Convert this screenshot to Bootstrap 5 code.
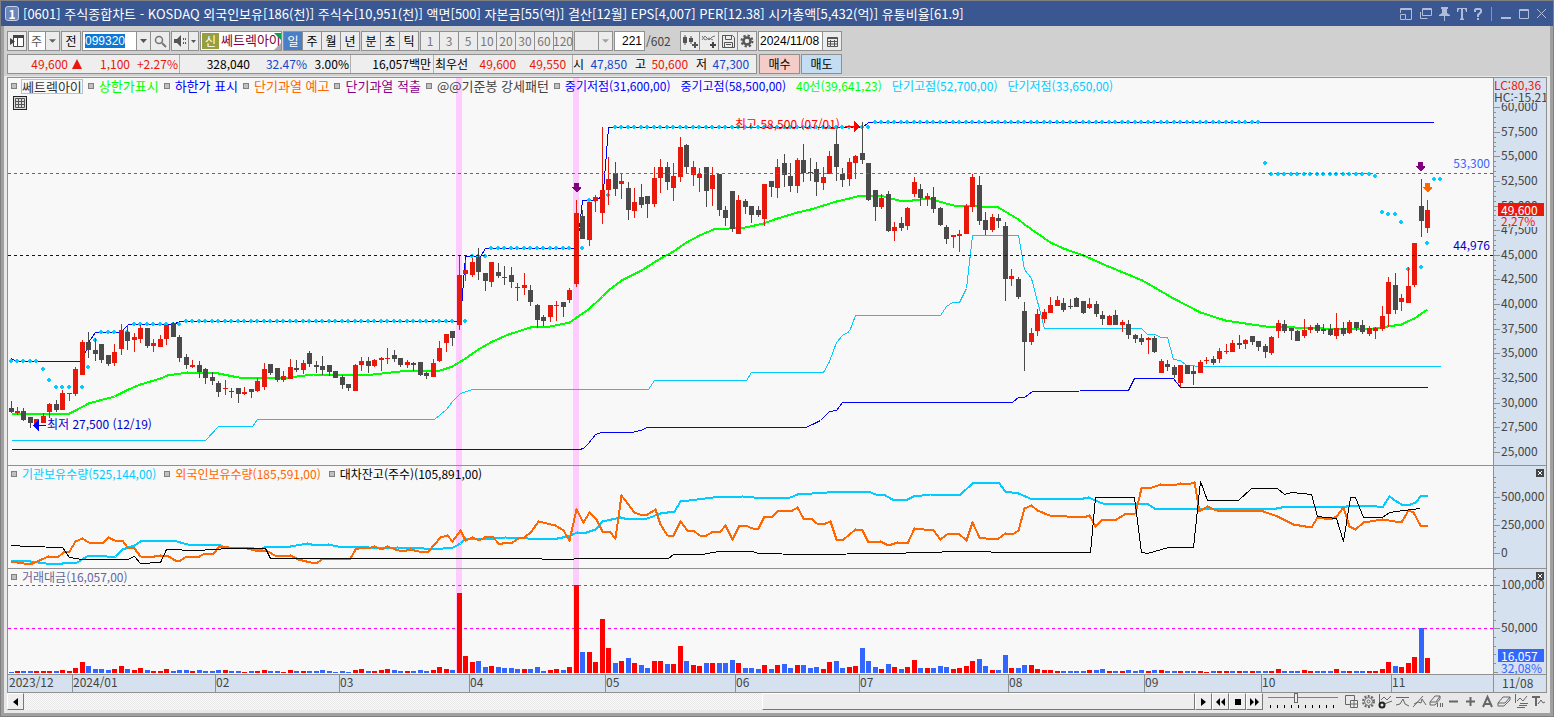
<!DOCTYPE html>
<html lang="ko">
<head>
<meta charset="utf-8">
<meta name="viewport" content="width=device-width, initial-scale=1">
<title>[0601] 주식종합차트</title>
<link href="https://cdn.jsdelivr.net/npm/bootstrap@5.3.0/dist/css/bootstrap.min.css" rel="stylesheet">
<style>
:root{--ln:#909090;--up:#e8190a;--cy:#00ccff;--ax:#d6e1ef}
body{font-family:"Noto Sans CJK KR","Liberation Sans",sans-serif;font-size:12px;line-height:16px;color:#000;background:#e8e8e8}
.win{min-height:100vh;border:solid #a0a0a0;border-width:1px 4px 4px 4px;outline:1px solid #808080;outline-offset:-1px}
.titlebar{height:25px;background:#3a5792;color:#fff;margin:0 -4px;padding:0 8px 0 5px;font-size:13px;white-space:pre}
.titlebar .num{width:14px;height:15px;border:1px solid #c5d0e6;border-radius:3px;background:#6c86bb;font-size:12px;line-height:13px;font-weight:700;text-align:center;margin-right:4px}
.titlebar button{border:0;background:none;padding:0;color:#b0bdd8;display:flex}
.left-icons{gap:7px}
.tools{background:#d0d0d0;padding:5px 0 2px 3px;gap:3px}
.tools-row{height:20px;gap:1px;white-space:nowrap}
.bx{border:1px solid var(--ln);background:#ececec;border-radius:0;padding:0;font-size:12px;line-height:16px;color:#000;height:20px}
.tb{width:20px;display:inline-flex;align-items:center;justify-content:center}
.tb.dim{color:#777}
.tb.on{background:#4a7fc8;color:#fff}
.sel{background:#ececec url("data:image/svg+xml,%3Csvg xmlns='http://www.w3.org/2000/svg' viewBox='0 0 8 4'%3E%3Cpath d='M0 0h8L4 4z' fill='%23606060'/%3E%3C/svg%3E") no-repeat right 3px center/7px 4px;appearance:none;border:1px solid var(--ln);height:20px;border-radius:0;font-size:12px;line-height:16px;padding:0 0 0 2px}
.sel.split{background:url("data:image/svg+xml,%3Csvg xmlns='http://www.w3.org/2000/svg' viewBox='0 0 8 4'%3E%3Cpath d='M0 0h8L4 4z' fill='%23606060'/%3E%3C/svg%3E") no-repeat right 3px center/7px 4px,linear-gradient(90deg,#909090 1px,#ececec 1px) no-repeat right/14px 100% #fff;color:#555}
.sel.off{background-image:url("data:image/svg+xml,%3Csvg xmlns='http://www.w3.org/2000/svg' viewBox='0 0 8 4'%3E%3Cpath d='M0 0h8L4 4z' fill='%23a0a0a0'/%3E%3C/svg%3E"),linear-gradient(90deg,#909090 1px,#ececec 1px);background-repeat:no-repeat;background-position:right 3px center,right;background-size:7px 4px,14px 100%}
.inp{border:1px solid var(--ln);background:#fff;height:20px;padding:0 2px;font-family:"Liberation Sans",sans-serif;font-size:12px;line-height:16px;border-radius:0;outline:0}
.code::selection{background:#0a78d6;color:#fff}
.quote{border:1px solid var(--ln);background:#eee;height:20px;width:750px;line-height:18px;margin-right:1px}
.quote>div{border-right:1px solid #b0b0b0;height:100%}
.quote>div:last-child{border:0}
.q1{width:172px}.q2{width:171px}.q3{width:83px}.q4{width:139px}
.n{text-align:right;width:50px}
.red{color:var(--up)}.blu{color:#1446c8}
.trade{width:41px;height:20px;border:1px solid var(--ln);border-radius:0;font-size:12px;line-height:16px;padding:0}
.frame{margin:1px 3px 0;border:1px solid var(--ln);border-bottom:0;display:grid;grid-template-columns:minmax(0,1fr) 53px;grid-template-rows:388fr 103fr 106fr 18px;background:#f8f8f8}
.cell{position:relative;border-bottom:1px solid var(--ln);min-height:0;overflow:hidden}
.cell>svg{position:absolute;inset:0;width:100%;height:100%}
.ax{background:var(--ax);border-left:1px solid var(--ln)}
svg text{font-size:12px}
.legend{position:relative;padding-left:3px;height:16px;white-space:nowrap}
.legend span{margin-left:5px;margin-right:5px}
.legend .name{font-size:13px}
.legend.wide span{margin-right:8px}
.legend i{width:6px;height:6px;border:1px solid #808080;background:#c0c0c0;flex:none}
.legend .boxed{outline:1px solid #c0c0c0;background:#fafafa;height:13px;line-height:13px;color:#333;margin-right:6px}
.gridbtn{position:relative;width:14px;height:14px;margin:2px 5px;padding:0;border:1px solid #222;background:#ddd;display:flex}
.tag{position:absolute;left:4px;right:2px;height:13px;line-height:13px;color:#fff;padding-left:3px;z-index:1}
.sub{position:absolute;left:4px;right:2px;height:12px;line-height:12px;padding-left:3px;background:var(--ax)}
.limits{position:absolute;left:0;right:0;top:1px;line-height:12px;background:var(--ax);white-space:nowrap}
.closebtn{position:absolute;right:2px;top:3px;width:8px;height:8px;background:#444;border:0;padding:0;display:flex}
.scrollrow{margin:0 3px;height:20px;padding-bottom:3px}
.track{background:repeating-conic-gradient(#e8e8e8 0 25%,#fafafa 0 50%) 0 0/2px 2px}
.thumb,.sb{background:#eee;border:1px solid;border-color:#fff #777 #777 #fff}
.thumb{height:17px;margin-left:auto;width:37%}
.sb{width:17px;height:17px;padding:0;display:flex;align-items:center;justify-content:center;flex:none;outline:0}
.zoomer{width:70px;margin:0 5px;height:16px}
.zoomer input{appearance:none;display:block;width:100%;height:10px;background:linear-gradient(#808080,#808080) 0 4px/100% 1px no-repeat;margin:0}
.zoomer input::-webkit-slider-thumb{appearance:none;width:4px;height:10px;background:#eee;border:1px solid #666}
.ticks{height:3px;background:repeating-linear-gradient(90deg,#000 0 1px,transparent 1px 7px);margin:2px 2px 0}
.ic{border:0;background:none;padding:0;width:17px;height:17px;display:flex;align-items:center;justify-content:center;color:#666}
</style>
</head>
<body>
<div class="win d-flex flex-column">
  <header class="titlebar d-flex align-items-center">
    <span class="num">1</span><span>[0601] 주식종합차트 - KOSDAQ 외국인보유[186(천)] 주식수[10,951(천)] 액면[500] 자본금[55(억)] 결산[12월] EPS[4,007] PER[12.38] 시가총액[5,432(억)] 유통비율[61.9]</span>
    <div class="ms-auto d-flex align-items-center gap-2">
      <div class="left-icons d-flex align-items-center">
      <button type="button" aria-label="도킹"><svg width="12" height="12" fill="none" stroke="currentColor"><path d="M.5 5V.5h11v11H6M.5 6.500h5v5h-5zM0 1.500h12"/></svg></button>
      <button type="button" aria-label="복제"><svg width="13" height="12" fill="none" stroke="currentColor"><path d="M3.500.5h9v7h-9zM3 1.500h9M1.500 4v6.500h7"/></svg></button>
      <button type="button" aria-label="고정"><svg width="11" height="14" fill="currentColor"><path d="M2 0h7v2H8v4l3 2v1H6v5H5V9H0V8l3-2V2H2z"/></svg></button>
      <button type="button" aria-label="글꼴"><svg width="10" height="12" fill="currentColor"><path d="M0 0h10v4H9L8 1H6v9l1 1v1H3v-1l1-1V1H2L1 4H0z"/></svg></button>
      <button type="button" aria-label="도움말"><svg width="8" height="12" fill="none" stroke="currentColor" stroke-width="2"><path d="M1 4V2l1-1h4l1 1v2L4 7v2M4 10v2"/></svg></button>
      </div>
      <svg width="3" height="14"><path d="M1.500 0v14" stroke="#7f93bd"/></svg>
      <button type="button" aria-label="최소화"><svg width="10" height="12"><path d="M0 10h10" stroke="currentColor" stroke-width="2"/></svg></button>
      <button type="button" aria-label="최대화"><svg width="10" height="10" fill="none" stroke="currentColor"><path d="M.5.5h9v9h-9zM0 1.500h10"/></svg></button>
      <button type="button" aria-label="닫기"><svg width="9" height="9"><path d="M0 0l9 9M9 0L0 9" stroke="currentColor"/></svg></button>
    </div>
  </header>

  <div class="tools d-flex flex-column">
    <div class="tools-row d-flex">
      <button class="bx tb" type="button" aria-label="패널"><svg width="14" height="14"><path d="M3.500 1.500h10v11h-10zM7.500 4v8" fill="#fff" stroke="#444"/><path d="M3 1h11v3H3zM0 4l5 3.500L0 11z" fill="#444"/></svg></button>
      <select class="sel split" aria-label="구분" style="width:32px"><option>주</option></select>
      <button class="bx tb" type="button">전</button>
      <div class="d-flex">
        <input class="inp code" id="code" aria-label="종목코드" value="099320" style="width:55px">
        <button class="bx tb" type="button" aria-label="목록" style="width:15px;margin-left:-1px"><svg width="7" height="4"><path d="M0 0h7L3.500 4z" fill="#555"/></svg></button>
        <button class="bx tb" type="button" aria-label="검색" style="margin-left:-1px"><svg width="13" height="13" fill="none" stroke="#777"><circle cx="5" cy="5" r="3.500" stroke-width="1.500"/><path d="M8 8l4 4" stroke-width="2"/></svg></button>
      </div>
      <div class="d-flex">
        <button class="bx tb" type="button" aria-label="소리" style="width:18px"><svg width="13" height="12" fill="#555"><path d="M0 4h3l4-4v12L3 8H0zM9 3h1v2H9zM9 7h1v2H9zM11 3h1v2h-1zM11 7h1v2h-1z"/></svg></button>
        <button class="bx tb" type="button" aria-label="소리 설정" style="width:11px;margin-left:-1px"><svg width="5" height="3"><path d="M0 0h5L2.500 3z" fill="#555"/></svg></button>
      </div>
      <div class="bx bg-white d-flex position-relative overflow-hidden" style="width:82px"><span style="background:#97a03c;color:#fff;width:17px;text-align:center;margin:1px 2px 1px 1px">신</span><span style="color:#800040;font-size:13px">쎄트렉아이</span>
        <svg class="position-absolute end-0 top-0" width="8" height="18"><path d="M1 1h7v7z" fill="#0fa050"/><path d="M8 11v7H1z" fill="#aaa"/></svg></div>
      <div class="d-flex" id="periods"></div>
      <div class="d-flex" id="units"></div>
      <div class="d-flex" id="mins"></div>
      <select class="sel off" aria-label="분 간격" disabled style="width:39px"><option></option></select>
      <div class="d-flex"><input class="inp text-end" aria-label="봉 개수" value="221" style="width:31px"><span style="color:#444;line-height:20px;width:34px;padding-left:1px">/602</span></div>
      <div class="d-flex">
        <button class="bx tb" type="button" aria-label="차트 유형"><svg width="16" height="15" fill="#555"><path d="M1 3h4v6H1zM2.500 1h1v10h-1zM7 4h4v4H7zM8.500 2h1v8h-1zM12 8h2v2h2v2h-2v2h-2v-2h-2v-2h2z"/></svg></button>
        <button class="bx tb" type="button" aria-label="지표 추가" style="margin-left:-1px"><svg width="16" height="15"><path d="M1 6l3-4 4 4 3-3 3-1M1 2l3 4 4-2 4 2" fill="none" stroke="#777"/><path d="M11 8h2v2h2v2h-2v2h-2v-2H9v-2h2z" fill="#444"/></svg></button>
        <button class="bx tb" type="button" aria-label="저장" style="margin-left:-1px"><svg width="15" height="15" fill="none" stroke="#555"><path d="M1.500 1.500h10l2 2v10h-12zM4.500 1.500v4h6v-4M3.500 13V8.500h8V13M5 10.500h5"/></svg></button>
        <button class="bx tb" type="button" aria-label="설정" style="margin-left:-1px"><svg width="14" height="14" fill="none" stroke="#555"><circle cx="7" cy="7" r="3.500" stroke-width="2.500"/><circle cx="7" cy="7" r="5.500" stroke-width="2" stroke-dasharray="2.300 2"/></svg></button>
      </div>
      <div class="d-flex"><input class="inp" aria-label="날짜" value="2024/11/08" style="width:65px;padding:0 1px">
        <button class="bx tb" type="button" aria-label="달력" style="margin-left:-1px"><svg width="11" height="11" fill="none" stroke="#555"><path d="M.5 1.500h10v9H.5zM0 2.500h11M0 5.500h11M0 8h11M3.500 4v7M7.500 4v7"/></svg></button></div>
    </div>
    <div class="tools-row d-flex">
      <div class="quote d-flex">
        <div class="q1 d-flex red"><span class="n" style="width:60px">49,600</span><svg class="mt-1 ms-1" width="10" height="10"><path d="M5 0l5 10H0z" fill="#e8190a"/></svg><span class="n" style="width:48px">1,100</span><span class="n" style="width:48px">+2.27%</span></div>
        <div class="q2 d-flex"><span class="n" style="width:70px">328,040</span><span class="n blu" style="width:57px">32.47%</span><span class="n" style="width:42px">3.00%</span></div>
        <div class="q3"><span class="d-block text-end" style="padding-right:2px">16,057백만</span></div>
        <div class="q4 d-flex"><span style="padding-left:1px">최우선</span><span class="n red" style="width:48px">49,600</span><span class="n red">49,550</span></div>
        <div class="d-flex"><span>시</span><span class="n blu" style="width:43px">47,850</span><span class="ms-2">고</span><span class="n red" style="width:42px">50,600</span><span class="ms-2">저</span><span class="n blu" style="width:42px">47,300</span></div>
      </div>
      <button class="trade" type="button" style="background:#f5cdc8">매수</button>
      <button class="trade" type="button" style="background:#c5ddf2">매도</button>
    </div>
  </div>

  <main class="frame flex-grow-1">
    <div class="cell" id="p1">
      <div class="legend d-flex align-items-center">
        <i></i><span class="name boxed">쎄트렉아이</span><i></i><span class="name" style="color:#0f0">상한가표시</span><i></i><span class="name" style="color:#00f">하한가 표시</span><i></i><span class="name" style="color:#f60">단기과열 예고</span><i></i><span class="name" style="color:#808">단기과열 적출</span><i></i><span class="name" style="color:#444">@@기준봉 강세패턴</span><i></i><span style="color:#00f">중기저점(31,600,00)</span><span style="color:#00f">중기고점(58,500,00)</span><span style="color:#0f0">40선(39,641,23)</span><span style="color:#0cf">단기고점(52,700,00)</span><span style="color:#0cf">단기저점(33,650,00)</span>
      </div>
      <button class="gridbtn" type="button" aria-label="표 보기"><svg width="12" height="12" fill="none" stroke="#555"><path d="M1.500 1.500h9v9h-9zM1 4.500h10M1 7.500h10M4.500 1v10M7.500 1v10"/></svg></button>
    </div>
    <div class="cell ax" id="a1">
      <div class="tag" style="top:32.200%;background:#e8190a">49,600</div>
      <div class="sub red" style="top:35.300%">2,27%</div>
      <div class="limits"><div class="red">LC:80,36</div><div style="color:#444">HC:-15,21</div></div>
    </div>
    <div class="cell" id="p2">
      <div class="legend wide d-flex align-items-center"><i></i><span style="color:#0cf">기관보유수량(525,144,00)</span><i></i><span style="color:#f60">외국인보유수량(185,591,00)</span><i></i><span>대차잔고(주수)(105,891,00)</span></div>
    </div>
    <div class="cell ax" id="a2"><button class="closebtn" type="button" aria-label="닫기"><svg width="8" height="8"><path d="M2 2l4 4M6 2L2 6" stroke="#fff"/></svg></button></div>
    <div class="cell" id="p3">
      <div class="legend d-flex align-items-center"><i></i><span style="color:#669">거래대금(16,057,00)</span></div>
    </div>
    <div class="cell ax" id="a3"><button class="closebtn" type="button" aria-label="닫기"><svg width="8" height="8"><path d="M2 2l4 4M6 2L2 6" stroke="#fff"/></svg></button>
      <div class="tag" style="bottom:12px;background:#36f">16,057</div>
      <div class="sub" style="bottom:0;color:#36f">32,08%</div></div>
    <div class="cell" id="dates" style="background:var(--ax)"></div>
    <div class="cell ax" style="color:#444;padding-left:8px">11/08</div>
  </main>

  <footer class="scrollrow d-flex">
    <button class="sb" type="button" aria-label="왼쪽"><svg width="5" height="8"><path d="M5 0v8L0 4z"/></svg></button>
    <div class="track flex-grow-1 d-flex"><div class="thumb"></div></div>
    <button class="sb" type="button" aria-label="오른쪽"><svg width="5" height="8"><path d="M0 0v8l5-4z"/></svg></button>
    <button class="sb" type="button" aria-label="처음"><svg width="9" height="8"><path d="M4 0v8L0 4zM9 0v8L5 4z"/></svg></button>
    <button class="sb" type="button" aria-label="정지"><svg width="6" height="6"><path d="M0 0h6v6H0z"/></svg></button>
    <button class="sb" type="button" aria-label="끝"><svg width="9" height="8"><path d="M0 0v8l4-4zM5 0v8l4-4z"/></svg></button>
    <div class="zoomer"><input type="range" min="0" max="100" value="39" aria-label="확대"><div class="ticks"></div></div>
    <div class="d-flex" id="drawtools"></div>
  </footer>
</div>

<script src="https://cdn.jsdelivr.net/npm/bootstrap@5.3.0/dist/js/bootstrap.bundle.min.js"></script>
<script>
const $=id=>document.getElementById(id);
const tabs=(id,list,on,dim)=>$(id).innerHTML=list.map((t,i)=>`<button type="button" class="bx tb ${t===on?'on':''} ${dim?'dim':''}" style="${i?'margin-left:-1px':''}">${t}</button>`).join('');
tabs('periods',['일','주','월','년'],'일');
tabs('units',['분','초','틱']);
tabs('mins',['1','3','5','10','20','30','60','120'],null,true);

// each candle: colour, high, body top, body bottom, low
const candles=`g401,408,412,413 r407,411,413,415 g408,411,420,421 g417,417,423,428 r419,419,424,424 r413,416,423,423 r403,404,412,418 g400,404,410,412 r390,393,410,410 r393,393,394,401 r367,369,394,396 r340,342,375,375 g332,342,350,358 g338,350,354,361 g344,344,360,363 g355,355,364,366 r344,352,363,366 r324,330,349,355 g325,332,341,350 r333,337,340,352
r325,328,339,343 g328,328,346,348 r339,343,346,352 r335,339,347,347 r325,325,339,345 g322,323,337,337 g335,337,358,362 g354,357,365,369 r360,365,367,368 g361,365,372,378 g368,369,378,384 g372,377,381,385 g381,383,392,397 r380,388,389,395 g388,391,392,398 g388,388,394,403 r387,392,394,395 g389,389,392,398 r378,381,391,392 r363,369,387,390
g364,364,373,375 g368,368,380,382 r371,376,380,382 r359,367,379,379 g360,368,370,372 r360,363,370,374 g351,353,364,367 g361,365,367,373 g356,366,370,375 g365,365,372,376 g371,371,378,378 g375,377,385,389 g384,384,388,391 r364,365,391,391 r357,361,365,371 g357,361,366,373 r359,360,366,367 r357,358,360,371 r348,358,359,364 g350,355,359,362
g358,358,365,367 r360,362,365,368 g362,363,365,371 g362,362,375,376 g372,373,376,379 r359,363,377,377 r341,348,361,362 r334,334,343,352 g331,331,338,346 r255,275,325,330 r260,270,274,281 r258,262,275,277 g248,257,272,280 g273,273,281,291 r262,262,282,287 g263,272,276,278 g266,277,278,285 g267,275,282,288 g283,287,288,301 r273,285,288,295
g285,290,302,306 g304,305,320,328 g315,317,321,326 r305,305,317,322 r301,305,306,321 g302,302,307,317 r288,290,300,303 r200,213,284,287 g210,216,239,239 r202,202,240,246 r195,197,201,212 r127,190,213,224 r157,179,190,205 g162,173,189,196 r174,181,184,199 g182,188,210,220 r188,202,211,218 g184,197,205,208 g196,196,204,218 r167,178,204,207
r159,167,178,193 g162,167,182,190 r163,176,188,201 r137,147,177,182 g144,145,167,173 r161,167,175,186 r168,174,178,192 g167,167,191,207 r167,175,189,206 g174,174,210,216 g206,210,218,226 g191,191,229,232 r195,200,234,234 g199,201,207,214 g206,206,215,223 g206,210,215,217 r184,184,219,226 g181,181,187,197 r159,167,188,198 g154,163,175,187
g163,176,186,192 r158,160,186,193 g144,160,173,182 g158,172,173,181 g162,169,182,196 r167,177,183,190 r151,156,174,174 g130,144,167,181 g168,174,180,187 r158,162,179,186 r155,156,163,179 g122,153,160,164 g163,163,200,201 g190,190,207,221 r194,198,207,209 g191,194,231,232 r222,227,231,241 g217,223,228,231 r207,208,226,230 r177,182,194,197
g184,189,198,206 r193,196,199,206 g187,197,209,213 g207,208,225,226 g225,227,239,244 r235,235,237,248 r230,234,236,252 r204,206,234,234 r174,177,207,212 g176,185,221,225 g212,220,230,235 r214,217,230,232 g214,218,221,228 g222,226,279,301 r269,276,279,286 g277,279,297,299 g302,311,342,371 r328,333,342,345 r309,314,331,336 r309,312,319,323
r297,305,313,313 r296,300,306,306 g298,303,310,312 g299,306,307,309 g297,298,307,307 g301,301,313,314 r298,304,308,309 g301,304,314,317 g311,315,319,325 r315,316,325,325 g310,315,325,325 r320,322,325,332 g320,324,335,339 g334,335,339,343 g334,338,342,345 r337,338,340,354 g336,338,352,353 r359,361,373,373 g360,364,367,371 g365,367,375,378
r365,365,383,387 g365,365,374,374 g366,371,374,385 r360,362,373,373 r357,360,361,364 g356,359,363,365 r348,351,359,363 r344,351,352,354 r340,343,352,352 g335,343,345,349 r339,340,344,349 g336,336,342,345 g341,341,347,351 g344,346,352,358 r336,337,353,355 r320,323,331,338 g320,324,331,333 g328,328,331,340 g330,331,341,341 r319,330,336,338
r325,327,330,333 g323,325,331,333 g324,329,331,334 g324,329,335,336 r313,328,336,339 g322,328,334,336 r320,322,333,334 g322,322,328,331 g320,325,332,334 r326,328,334,336 r327,328,331,339 r306,316,329,331 r277,282,314,327 g273,285,310,314 r294,298,302,311 r267,286,303,303 r243,243,285,287 g179,206,221,237 r200,210,228,233`.split(/\s+/);
// traded value per bar, height in chart units
const vols=`b1 r2 b2 b2 r2 r2 r2 b2 r3 r2 r5 r11 b7 b4 b4 b3 r4 r7 b4 r3 r5 b3 r2 r2 r4 b2 b3 b3 r2 b3 b2 b2 b3 r3 b2 b2 r1 b2 r2 r3 b2 b2 r1 r3 b2 r2 b2 b2 b3 b2 b1 b2 b1 r3 r4 b2 r2 r3 r4 b3 b2 r2 b2 b3 b2 r3 r6 r4 b3 r80 r17 r11 b12 b6 r7 b6 b5 b5 b4 r4 b4 b6 b2 r3 r4 b3 r6 r88 b21 r21 r11 r54 r25 b10 r12 b15 r10 b8 b5 r12 r12 b9 r9 r27 b12 r8 r7 b10 r10 b10 b10 b13 r10 b5 b5 b4 r8 b4 r8 b9 b5 r8 b8 b5 b6 r4 r11 b12 b5 r6 r7 b25 b12 b6 r4 b9 r6 b4 r6 r13 b5 r5 b5 b7 b6 r4 r5 r7 r12 b14 b7 r3 b3 b18 r5 b5 b8 r8 r4 r3 r3 r2 b2 b2 b2 b2 r3 b3 b4 r2 b2 r2 b3 b2 b3 r2 b3 r3 b2 b2 r2 b2 b2 r2 r1 b2 r2 r2 b2 r2 b2 r2 b2 b2 r2 r4 b2 b2 b2 r3 r2 b2 b2 b2 r4 b2 r2 b2 b2 r2 r2 r4 r11 b7 r6 r10 r16 b45 r15`.split(' ');
const dotRuns=[[0,4,361],[5,5,369],[6,6,380],[7,9,387],[11,11,387],[12,12,367],[13,13,340],[14,18,332],[19,26,324],[27,70,321],[71,73,256],[74,88,248],[89,91,200],[92,92,195],[93,132,127],[133,192,122],[193,193,163],[194,209,174],[210,210,176],[211,211,212],[212,213,214],[214,214,222],[215,215,269],[217,217,267],[218,218,243],[219,220,179]];
const bx=i=>Math.floor(11+6.498*i);
const line=(p,c,w=1)=>`<polyline points="${p}" transform="translate(.5 .5)" fill="none" stroke="${c}" stroke-width="${w}" stroke-linejoin="round"/>`;
const dash=(y,c)=>`<path d="M8 ${y}.5H1493" stroke="${c}" stroke-dasharray="3 3"/>`;
const bands=(y,h)=>`<path d="M456 ${y}h6v${h}h-6zM573 ${y}h6v${h}h-6z" fill="#fcf"/>`;
const plot=(id,top,h,body,over='')=>$(id).insertAdjacentHTML('afterbegin',`<svg><svg viewBox="8 ${top} 1485 ${h}" preserveAspectRatio="none" width="100%" height="100%" shape-rendering="crispEdges">${body}</svg>${over}</svg>`);
const pc=(v,o,s)=>((v-o)/s*100).toFixed(3)+'%';
const label=(x,y,t,c,a='start')=>`<text x="${pc(x,8,1485)}" y="${pc(y,78,387)}" fill="${c}" text-anchor="${a}">${t}</text>`;
const col={r:'#e8190a',g:'#4a4a4a'};

let s=bands(78,387);
s+=line('11,358 14,360 17,361 80,361 85,352 88,342 95,332 121,332 123,329 128,324 172,324 180,321 460,321 462,294 465,256 480,256 485,248 576,248 579,227 582,200 593,200 599,198 603,190 608,127 862,127 868,122 1433,122','#00f');
s+=line('11,449 579,449 583,448 588,443 595,434 601,432 631,432 640,430 647,427 805,427 812,424 820,420 829,411 836,410 842,402 1012,402 1018,397 1024,397 1032,391 1128,390 1134,378 1173,378 1180,387 1427,387','#00f');
s+=line('11,440 205,440 218,426 252,426 257,419 434,419 440,414 446,409 452,401 460,393 472,389 648,389 654,380 746,380 751,372 823,372 829,361 836,342 842,335 849,331 855,315 940,315 946,306 952,302 959,302 966,288 972,235 1018,235 1024,269 1031,278 1037,301 1044,328 1141,328 1147,334 1154,334 1161,337 1167,337 1173,359 1180,360 1186,365 1202,366 1440,366','#0cf');
s+=line('11,413 62,413 69,413 75,410 88,403 114,396 128,389 140,384 160,378 167,375 187,372 218,373 238,377 288,377 313,374 363,375 400,371 440,370 452,366 465,358 478,349 492,341 508,334 530,327 550,326 569,322 588,309 602,296 608,290 621,280 641,270 660,258 673,251 686,242 699,235 713,229 745,227 763,223 777,218 797,212 810,209 836,201 849,198 860,195 880,195 898,200 912,200 927,198 935,200 953,205 979,206 998,207 1018,219 1024,224 1050,242 1063,248 1083,255 1108,266 1142,280 1154,287 1173,298 1200,312 1225,320 1265,326 1323,328 1373,328 1387,326 1401,324 1407,321 1414,318 1427,309','#0f0',2);
for(const [a,b,y] of dotRuns)for(let i=a;i<=b;i++)s+=`<path d="M${bx(i)-1} ${y-2}h2v1h1v2h-1v1h-2v-1h-1v-2h1z" fill="#0cf"/>`;
candles.forEach((c,i)=>{const [h,t,b,l]=c.slice(1).split(',').map(Number),x=bx(i);
  s+=`<path d="M${x} ${h}h1v${Math.max(l-h,1)}h-1zM${x-2} ${t}h5v${b-t}h-5z" fill="${col[c[0]]}"/>`});
s+=dash(173,'#36f')+dash(255,'#0000c0');
const arrow=(x,y,c)=>`<path d="M${x-2} ${y}h5v4h2v1l-4 4h-1l-4-4v-1h2z" fill="${c}"/>`;
s+=arrow(576,183,'#800080')+arrow(1420,162,'#800080')+arrow(1427,183,'#f60');
s+='<path d="M845 126h9v-5l6 6-6 5v-5h-9z" fill="red"/><path d="M46 425h-7v-5l-6 5.500 6 5.500v-5h7z" fill="#00f"/>';
plot('p1',78,387,s,label(735,129,'최고 58,500 (07/01)','red')+label(47,429,'최저 27,500 (12/19)','#0000c8')+label(1490,168,'53,300','#36f','end')+label(1490,250,'44,976','#0000c8','end'));

s=bands(466,102);
s+=line('11,560 30,561 45,563 62,563 77,562 88,555 103,555 110,557 115,556 122,549 134,545 140,541 173,540 187,544 218,544 225,547 253,548 260,549 266,546 290,546 307,543 315,545 328,544 337,546 360,546 377,548 397,547 423,548 432,549 453,547 460,543 465,538 483,539 505,537 527,538 557,538 567,536 577,532 583,533 595,529 602,521 620,517 628,519 647,518 660,513 674,511 680,501 713,497 742,496 765,498 790,497 797,494 827,492 868,491 875,494 883,494 892,499 907,499 913,496 930,494 960,494 973,482 998,482 1005,491 1018,493 1032,499 1039,498 1083,498 1088,497 1102,503 1134,503 1148,504 1154,508 1276,508 1286,506 1346,506 1353,505 1371,505 1382,507 1389,496 1396,501 1403,505 1410,504 1415,502 1421,495 1427,495','#0cf',2);
s+=line('11,561 23,563 32,563 48,556 57,557 63,552 69,551 75,541 82,538 88,542 102,543 108,537 114,540 122,540 127,547 134,548 140,556 148,557 160,555 168,556 175,560 180,560 186,556 199,556 204,553 213,553 219,546 228,547 247,548 258,551 266,550 276,556 290,555 298,559 310,562 317,562 323,558 350,558 355,549 361,547 367,548 374,546 381,549 387,546 395,549 402,551 410,549 418,551 428,551 440,537 447,535 452,541 460,530 465,540 472,537 479,540 486,536 492,536 499,544 505,542 512,542 518,538 524,537 531,531 538,521 555,525 563,530 569,540 576,509 583,522 589,512 596,519 602,531 609,531 615,538 621,495 634,512 642,515 647,514 655,509 660,524 667,535 673,535 680,521 687,530 693,530 699,535 706,535 713,531 720,531 725,525 732,539 739,525 745,525 752,528 758,528 764,516 772,516 778,510 792,510 797,507 803,518 811,518 816,523 825,523 830,521 836,539 843,539 855,529 862,530 868,542 880,541 888,545 897,542 907,543 914,528 933,530 940,539 948,533 958,533 966,540 972,522 979,537 985,538 998,538 1005,533 1012,534 1018,530 1024,508 1031,505 1037,510 1049,515 1083,517 1089,515 1095,526 1102,519 1116,519 1124,514 1135,513 1141,488 1152,487 1160,484 1173,485 1180,483 1187,484 1194,482 1199,511 1207,506 1216,510 1263,511 1277,516 1293,524 1311,527 1317,517 1330,519 1336,516 1343,507 1349,526 1355,529 1363,522 1382,519 1401,522 1408,510 1413,512 1420,525 1427,525','#f60',2);
s+=line('11,545 27,546 62,547 69,557 82,559 127,559 134,556 140,563 160,562 166,549 197,550 228,548 265,548 270,558 541,558 542,559 573,559 574,558 668,558 673,554 702,554 718,551 752,551 758,553 805,554 888,553 960,551 1020,552 1090,552 1095,497 1134,497 1141,552 1147,553 1168,547 1193,547 1200,481 1207,500 1238,500 1251,488 1277,488 1284,494 1291,492 1311,494 1317,516 1336,518 1343,541 1350,497 1355,497 1363,517 1382,517 1389,512 1403,510 1420,508','#000');
plot('p2',466,102,s);

s=bands(569,104)+dash(585,'#f0f')+dash(628,'#f0f');
vols.forEach((v,i)=>{const h=+v.slice(1);s+=`<path d="M${bx(i)-2} ${673-h}h5v${h}h-5z" fill="${v[0]==='r'?'red':'#36f'}"/>`});
plot('p3',569,105,s);

// value axes: major ticks with labels, minor ticks between them
function axis(id,top,h,majors,minor){
  let o='';
  for(const [y,t] of majors)o+=`<svg y="${pc(y,top,h)}" overflow="visible"><path d="M0 .5h6" stroke="#909090"/><text x="7" y="4" fill="#444">${t}</text></svg>`;
  for(const y of minor)o+=`<svg y="${pc(y,top,h)}" overflow="visible"><path d="M0 .5h2" stroke="#909090"/></svg>`;
  $(id).insertAdjacentHTML('afterbegin',`<svg shape-rendering="crispEdges">${o}</svg>`);
}
const maj=[],min=[];
for(let k=0;k<15;k++){const y=107+24.64*k;maj.push([Math.round(y),(60000-2500*k).toLocaleString('en-US')]);if(k<14)for(let m=1;m<5;m++)min.push(Math.round(y+4.93*m))}
axis('a1',78,387,maj,min);
axis('a2',466,102,[[497,'500,000'],[525,'250,000'],[553,'0']],[477,482,487,492,503,508,514,519,531,536,542,547]);
axis('a3',569,105,[[585,'100,000'],[628,'50,000'],[672,'']],[569,577,594,602,611,620,637,646,654,663]);

let d='';
for(const [x,t] of [[8,'2023/12'],[72,'2024/01'],[215,'02'],[339,'03'],[469,'04'],[605,'05'],[735,'06'],[859,'07'],[1008,'08'],[1144,'09'],[1261,'10'],[1391,'11']])
  d+=`<svg x="${pc(x,8,1485)}" overflow="visible">${x>8?'<path d="M.5 0v18" stroke="#909090"/>':''}<text x="1" y="12" fill="#444">${t}</text></svg>`;
$('dates').innerHTML=`<svg shape-rendering="crispEdges">${d}</svg>`;

const icons=[
 ['창','<path d="M1.500 1.500h9v9h-9z"/><path d="M6.500 6.500h7v7h-7zM10 6v8M6 10h8" fill="#f0f0f0"/>'],
 ['설정','<circle cx="7.500" cy="7.500" r="5.500" stroke-width="2" stroke-dasharray="2 1.500"/><circle cx="7.500" cy="7.500" r="4"/><circle cx="7.500" cy="7.500" r="1.500"/>'],
 ['지표','<path d="M1.500 0v9M3 6l3-3 3 3 4-4M6 10l8-3"/><circle cx="4" cy="11" r="2.500" stroke="#222" stroke-width="2"/>'],
 ['수평선','<path d="M1 3.500h13M1 11l4-1 3-5 2 5 4 2"/>'],
 ['추세선','<path d="M1 13L11 2M2 10l4-2 3 1 1-4 4 6"/>'],
 ['전체 지우기','<path d="M1 8l5-6h5l-4 6zM1 8v3h5l5-6V2M8.500 13V9M11.500 13V9M13.500 13V9"/>'],
 ['축소','<path d="M3 7.500h9" stroke-width="2"/>'],
 ['확대','<path d="M3 7.500h9M7.500 3v9" stroke-width="2"/>'],
 ['글자','<path d="M3 13L7.500 3 12 13M5 10h5" stroke-width="2"/>'],
 ['지우개','<path d="M1 9l5-6h7l-5 6zM1 9v3h6l6-6V3"/>'],
 ['분석','<path d="M1.500 0v9M3 7l3-3 3 3 4-5M6 9.500h8M5 11.500h8M3 13.500h8"/>'],
 ['문자','<path d="M1 3h8M5 3v9" stroke-width="2"/><path d="M7 10l3-4 2 3 2-1"/>']
];
$('drawtools').innerHTML=icons.map(([n,p])=>`<button class="ic" type="button" aria-label="${n}"><svg width="15" height="15" fill="none" stroke="currentColor">${p}</svg></button>`).join('');

$('code').focus();$('code').select();
</script>
</body>
</html>
